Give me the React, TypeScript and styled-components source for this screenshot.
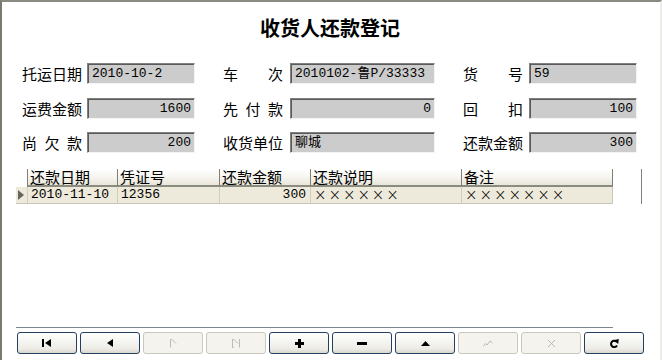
import React from "react";
import styled, { createGlobalStyle } from "styled-components";

const Global = createGlobalStyle`
  html, body { margin: 0; padding: 0; background: #ffffff; }
  body { font-family: "Noto Sans CJK SC", "Liberation Sans", sans-serif; }
  * { box-sizing: border-box; }
`;

const Frame = styled.div`
  width: 662px;
  height: 360px;
  background: #ffffff;
  border-top: 2px solid #8a8a80;
  border-left: 2px solid #7a7a70;
  border-right: 2px solid #ececea;
  display: flex;
  flex-direction: column;
  overflow: hidden;
`;

const Title = styled.h1`
  margin: 0;
  height: 61px;
  padding-top: 12px;
  text-align: center;
  font-family: "Noto Sans CJK SC", sans-serif;
  font-weight: 700;
  font-size: 20px;
  line-height: 28px;
  color: #000;
  padding-right: 2px;
`;

const Form = styled.div`
  display: flex;
  flex-direction: column;
  gap: 13.5px;
  padding-left: 20px;
`;

const FormRow = styled.div`
  display: grid;
  grid-template-columns: 173px 212px 174px;
  column-gap: 28px;
  height: 21px;
`;

const Field = styled.div<{ $gap: number }>`
  display: grid;
  grid-template-columns: 60px 1fr;
  column-gap: ${(p) => p.$gap}px;
  align-items: center;
`;

const LabelBox = styled.div`
  display: flex;
  justify-content: space-between;
  font-family: "Noto Sans CJK SC", sans-serif;
  font-size: 15px;
  line-height: 21px;
  color: #000;
`;

const Input = styled.div<{ $align?: "left" | "right" }>`
  height: 21px;
  background: #cccccc;
  border-top: 1px solid #808080;
  border-left: 1px solid #808080;
  border-bottom: 1px solid #f4f4f4;
  border-right: 1px solid #f4f4f4;
  box-shadow: inset 1px 1px 0 #5a5a5a;
  padding: 0 3px 0 4px;
  text-align: ${(p) => p.$align ?? "left"};
  font-family: "Liberation Mono", "Noto Sans CJK SC", monospace;
  font-size: 13px;
  line-height: 19px;
  color: #000;
  white-space: nowrap;
  overflow: hidden;
`;

const GridArea = styled.div`
  margin-top: 16px;
  margin-left: 14px;
  display: flex;
  align-items: flex-start;
  flex: 1;
`;

const Table = styled.div`
  width: 597px;
  display: flex;
  flex-direction: column;
`;

const COLS = "11px 90px 102px 91px 151px 152px";

const HeaderRow = styled.div`
  display: grid;
  grid-template-columns: ${COLS};
  height: 18px;
`;

const HeadCell = styled.div<{ $blank?: boolean }>`
  background: ${(p) =>
    p.$blank ? "#ffffff" : "linear-gradient(#ffffff 0%, #f7f6f1 45%, #e9e6da 100%)"};
  border-bottom: ${(p) => (p.$blank ? "none" : "2px solid #8c8b80")};
  border-left: ${(p) => (p.$blank ? "none" : "1px solid #7f7f78")};
  padding-left: 2px;
  font-family: "Noto Sans CJK SC", sans-serif;
  font-size: 15px;
  line-height: 16px;
  color: #000;
  white-space: nowrap;
  &:last-child {
    border-right: 1px solid #7f7f78;
  }
`;

const DataRow = styled.div`
  display: grid;
  grid-template-columns: ${COLS};
  height: 17px;
  background: #eeeadb;
  border-bottom: 1px solid #c9c6b6;
`;

const Cell = styled.div<{ $align?: "left" | "right"; $cross?: boolean }>`
  border-left: 1px solid #d2cebf;
  padding: 0 4px 0 3px;
  text-align: ${(p) => p.$align ?? "left"};
  font-family: ${(p) =>
    p.$cross ? '"DejaVu Sans", sans-serif' : '"Liberation Mono", monospace'};
  font-size: ${(p) => (p.$cross ? "15px" : "13px")};
  font-weight: ${(p) => (p.$cross ? 200 : 400)};
  letter-spacing: ${(p) => (p.$cross ? "1.9px" : "0")};
  line-height: 16px;
  color: #000;
  white-space: nowrap;
  &:last-child {
    border-right: 1px solid #c9c6b6;
  }
`;

const Indicator = styled.div`
  display: flex;
  align-items: center;
  justify-content: flex-start;
  padding-left: 2px;
`;

const ScrollLine = styled.div`
  margin-left: 28px;
  width: 1px;
  height: 35px;
  background: #808080;
`;

const Divider = styled.div`
  margin-left: 14px;
  width: 597px;
  height: 1px;
  background: #7c8592;
`;

const ButtonBar = styled.div`
  display: flex;
  gap: 3px;
  padding: 4px 0 6px 15px;
`;

const NavButton = styled.button<{ $disabled?: boolean }>`
  width: 60px;
  height: 22px;
  padding: 0;
  margin: 0;
  display: flex;
  align-items: center;
  justify-content: center;
  border-radius: 3px;
  border: 1px solid ${(p) => (p.$disabled ? "#cac8bb" : "#23405e")};
  background: ${(p) =>
    p.$disabled
      ? "#f4f3ee"
      : "linear-gradient(#ffffff 0%, #f6f6f2 40%, #ecebe5 80%, #d9d6cc 100%)"};
  color: ${(p) => (p.$disabled ? "#bdbbad" : "#000")};
  cursor: default;
`;

const Label: React.FC<{ text: string }> = ({ text }) => (
  <LabelBox>
    {text
      .split("")
      .filter((c) => c.trim() !== "")
      .map((c, i) => (
        <span key={i}>{c}</span>
      ))}
  </LabelBox>
);

const IconFirst = () => (
  <svg width="10" height="8" viewBox="0 0 10 8">
    <rect x="0" y="0" width="2" height="8" fill="currentColor" />
    <polygon points="9,0 9,8 3,4" fill="currentColor" />
  </svg>
);
const IconPrev = () => (
  <svg width="6" height="8" viewBox="0 0 6 8">
    <polygon points="6,0 6,8 0,4" fill="currentColor" />
  </svg>
);
const IconNext = () => (
  <svg width="8" height="10" viewBox="0 0 8 10">
    <path d="M1.5 9.5 V1.5 H3 L7 5.5" stroke="currentColor" fill="none" strokeWidth="1" />
  </svg>
);
const IconLast = () => (
  <svg width="10" height="10" viewBox="0 0 10 10">
    <path d="M1.5 9.5 V1.5 H3 L7 5.5 M8.5 1 V9.5 M1.5 9.5 H3" stroke="currentColor" fill="none" strokeWidth="1" />
  </svg>
);
const IconPlus = () => (
  <svg width="9" height="9" viewBox="0 0 9 9">
    <rect x="0" y="3" width="9" height="3" fill="currentColor" />
    <rect x="3" y="0" width="3" height="9" fill="currentColor" />
  </svg>
);
const IconMinus = () => (
  <svg width="10" height="3" viewBox="0 0 10 3">
    <rect x="0" y="0" width="10" height="3" fill="currentColor" />
  </svg>
);
const IconUp = () => (
  <svg width="9" height="5" viewBox="0 0 9 5">
    <polygon points="0,5 9,5 4.5,0" fill="currentColor" />
  </svg>
);
const IconCheck = () => (
  <svg width="10" height="7" viewBox="0 0 10 7">
    <path d="M0.5 6.5 L2.5 3.5 L4 5 L7 1 L9.5 3" stroke="currentColor" fill="none" strokeWidth="1" />
  </svg>
);
const IconCancel = () => (
  <svg width="9" height="9" viewBox="0 0 9 9">
    <path d="M1 1 L8 8 M8 1 L1 8" stroke="currentColor" fill="none" strokeWidth="1" />
  </svg>
);
const IconRefresh = () => (
  <svg width="9" height="10" viewBox="0 0 9 10">
    <path d="M6.2 3.4 A3.2 3.2 0 1 0 7 7.6" stroke="currentColor" fill="none" strokeWidth="2" />
    <polygon points="3.5,2.2 8.8,1 8.2,6" fill="currentColor" />
  </svg>
);

const Triangle = () => (
  <svg width="6" height="10" viewBox="0 0 6 10">
    <polygon points="0,0 6,5 0,10" fill="#66665f" />
  </svg>
);

type FieldDef = { label: string; value: string; align?: "left" | "right"; gap: number };

const rows: FieldDef[][] = [
  [
    { label: "托运日期", value: "2010-10-2", gap: 5 },
    { label: "车　次", value: "2010102-鲁P/33333", gap: 7 },
    { label: "货　号", value: "59", gap: 6 },
  ],
  [
    { label: "运费金额", value: "1600", align: "right", gap: 5 },
    { label: "先 付 款", value: "0", align: "right", gap: 7 },
    { label: "回　扣", value: "100", align: "right", gap: 6 },
  ],
  [
    { label: "尚 欠 款", value: "200", align: "right", gap: 5 },
    { label: "收货单位", value: "聊城", gap: 7 },
    { label: "还款金额", value: "300", align: "right", gap: 6 },
  ],
];

const buttons: { icon: React.ReactNode; disabled?: boolean }[] = [
  { icon: <IconFirst /> },
  { icon: <IconPrev /> },
  { icon: <IconNext />, disabled: true },
  { icon: <IconLast />, disabled: true },
  { icon: <IconPlus /> },
  { icon: <IconMinus /> },
  { icon: <IconUp /> },
  { icon: <IconCheck />, disabled: true },
  { icon: <IconCancel />, disabled: true },
  { icon: <IconRefresh /> },
];

export default function App() {
  return (
    <>
      <Global />
      <Frame>
        <Title>收货人还款登记</Title>
        <Form>
          {rows.map((row, ri) => (
            <FormRow key={ri}>
              {row.map((f, fi) => (
                <Field key={fi} $gap={f.gap}>
                  <Label text={f.label} />
                  <Input $align={f.align}>{f.value}</Input>
                </Field>
              ))}
            </FormRow>
          ))}
        </Form>
        <GridArea>
          <Table>
            <HeaderRow>
              <HeadCell $blank />
              <HeadCell>还款日期</HeadCell>
              <HeadCell>凭证号</HeadCell>
              <HeadCell>还款金额</HeadCell>
              <HeadCell>还款说明</HeadCell>
              <HeadCell>备注</HeadCell>
            </HeaderRow>
            <DataRow>
              <Indicator>
                <Triangle />
              </Indicator>
              <Cell>2010-11-10</Cell>
              <Cell>12356</Cell>
              <Cell $align="right">300</Cell>
              <Cell $cross>××××××</Cell>
              <Cell $cross>×××××××</Cell>
            </DataRow>
          </Table>
          <ScrollLine />
        </GridArea>
        <Divider />
        <ButtonBar>
          {buttons.map((b, i) => (
            <NavButton key={i} $disabled={b.disabled} disabled={b.disabled}>
              {b.icon}
            </NavButton>
          ))}
        </ButtonBar>
      </Frame>
    </>
  );
}
